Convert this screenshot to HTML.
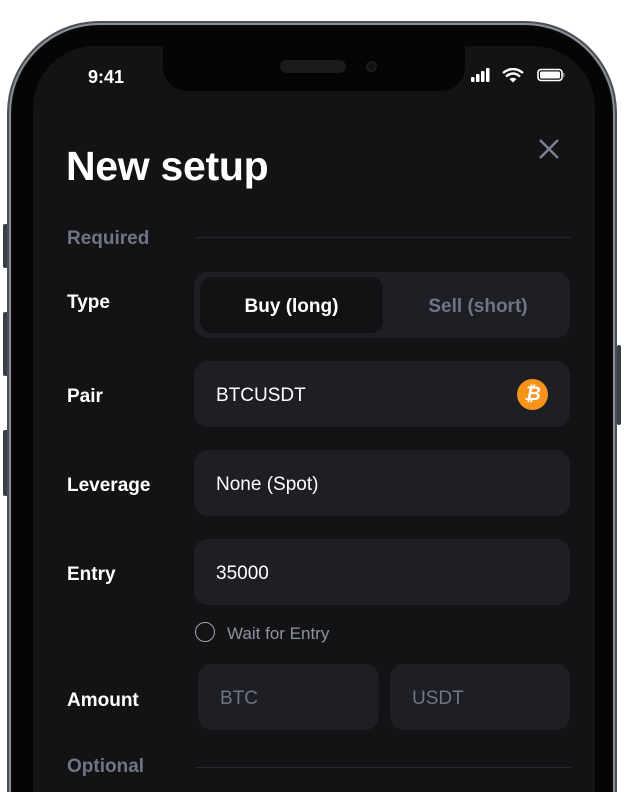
<!DOCTYPE html>
<html><head><style>
*{margin:0;padding:0;box-sizing:border-box}
html{width:624px;height:792px;overflow:hidden}
body{width:624px;height:792px;background:#fff;position:relative;overflow:hidden;font-family:"Liberation Sans",sans-serif}
.rim{position:absolute;left:7px;top:21px;width:610px;height:771px;border-radius:92px 92px 0 0;background:#4a4e55;}
.rim2{position:absolute;left:9px;top:23px;width:606px;height:769px;border-radius:90px 90px 0 0;background:#0a0a0b;border:2px solid #8a8f97;border-bottom:none}
.bez{position:absolute;left:13px;top:27px;width:598px;height:765px;border-radius:86px 86px 0 0;background:#050505}
.scr{position:absolute;left:33px;top:46px;width:562px;height:746px;border-radius:62px 62px 0 0;background:#131315;overflow:hidden}
.btn{position:absolute;background:#3a3d42;border-radius:2px}
.notch{position:absolute;left:130px;top:0;width:302px;height:45px;background:#050505;border-radius:0 0 24px 24px}
.t{position:absolute;color:#fff}
.lbl{position:absolute;left:34px;color:#fff;font-weight:bold;font-size:19px}
.box{position:absolute;background:#1e1f25;border-radius:14px}
.in{position:absolute;left:22px;color:#fff;font-size:19px}
.sec{position:absolute;left:34px;color:#6f7585;font-weight:bold;font-size:19px}
.line{position:absolute;left:162px;width:376px;height:1px;background:#26272d}
</style></head><body>
<div class="btn" style="left:3px;top:224px;width:5px;height:44px"></div>
<div class="btn" style="left:3px;top:312px;width:5px;height:64px"></div>
<div class="btn" style="left:3px;top:430px;width:5px;height:66px"></div>
<div class="btn" style="left:617px;top:345px;width:4px;height:80px"></div>
<div class="rim"></div><div class="rim2"></div><div class="bez"></div>
<div class="scr">
 <div class="notch"><div style="position:absolute;left:117px;top:14px;width:66px;height:13px;border-radius:7px;background:#1a1a1c"></div><div style="position:absolute;left:203px;top:15px;width:11px;height:11px;border-radius:50%;background:#111;border:2px solid #1c1c20"></div></div>
 <div class="t" style="left:55px;top:21px;font-size:18px;font-weight:bold">9:41</div>
 <svg style="position:absolute;left:438px;top:22px" width="94" height="16">
  <rect x="0" y="9" width="3.5" height="5" rx="1" fill="#fff"/><rect x="5" y="6" width="3.5" height="8" rx="1" fill="#fff"/><rect x="10" y="3" width="3.5" height="11" rx="1" fill="#fff"/><rect x="15" y="0" width="3.5" height="14" rx="1" fill="#fff"/>
  <path d="M32 5 Q42 -3 52 5 M35 8.5 Q42 2.5 49 8.5" stroke="#fff" stroke-width="2.4" fill="none"/><path d="M38.5 11 L42 14.5 L45.5 11 Q42 8.5 38.5 11 Z" fill="#fff"/>
  <rect x="67" y="1.5" width="24" height="11" rx="3" fill="none" stroke="#fff" stroke-width="1.6"/><rect x="69" y="3.5" width="20" height="7" rx="1.5" fill="#fff"/><rect x="92" y="5" width="1.5" height="4" fill="#888"/>
 </svg>
 <svg style="position:absolute;left:505px;top:92px" width="22" height="22"><path d="M2 2L20 20M20 2L2 20" stroke="#7c8192" stroke-width="2.4"/></svg>
 <div class="t" style="left:33px;top:97px;font-size:41px;font-weight:bold;letter-spacing:-0.3px">New setup</div>
 <div class="sec" style="top:182px">Required</div><div class="line" style="top:191px"></div>
 <div class="lbl" style="top:246px">Type</div>
 <div class="box" style="left:161px;top:226px;width:376px;height:66px"></div>
 <div class="box" style="left:167px;top:231px;width:183px;height:56px;background:#121215;border-radius:12px"></div>
 <div class="t" style="left:167px;width:183px;top:250px;text-align:center;font-weight:bold;font-size:19px">Buy (long)</div>
 <div class="t" style="left:355px;width:180px;top:250px;text-align:center;font-weight:bold;font-size:19px;color:#6f7585">Sell (short)</div>
 <div class="lbl" style="top:340px">Pair</div>
 <div class="box" style="left:161px;top:315px;width:376px;height:66px"><div class="in" style="top:24px">BTCUSDT</div>
  <div style="position:absolute;left:323px;top:18px;width:31px;height:31px;border-radius:50%;background:#f7931a;color:#fff;font-weight:bold;font-size:19px;text-align:center;line-height:31px;font-style:italic">₿</div></div>
 <div class="lbl" style="top:429px">Leverage</div>
 <div class="box" style="left:161px;top:404px;width:376px;height:66px"><div class="in" style="top:24px">None (Spot)</div></div>
 <div class="lbl" style="top:518px">Entry</div>
 <div class="box" style="left:161px;top:493px;width:376px;height:66px"><div class="in" style="top:24px">35000</div></div>
 <div style="position:absolute;left:162px;top:576px;width:20px;height:20px;border-radius:50%;border:1.5px solid #a0a4ae"></div>
 <div class="t" style="left:194px;top:578px;font-size:17px;color:#8d92a0">Wait for Entry</div>
 <div class="lbl" style="top:644px">Amount</div>
 <div class="box" style="left:165px;top:618px;width:181px;height:66px"><div class="in" style="top:24px;color:#6f7585">BTC</div></div>
 <div class="box" style="left:357px;top:618px;width:180px;height:66px"><div class="in" style="top:24px;color:#6f7585">USDT</div></div>
 <div class="sec" style="top:710px">Optional</div><div class="line" style="top:721px"></div>
</div>
</body></html>
